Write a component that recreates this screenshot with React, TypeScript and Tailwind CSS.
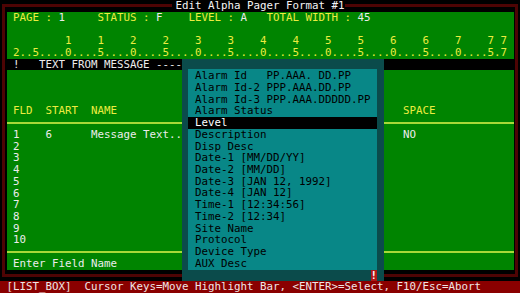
import React from "react";

const ROW = "h-[11.72px] leading-[11.72px]";

const listItems = [
  "Alarm Id   PP.AAA. DD.PP",
  "Alarm Id-2 PPP.AAA.DD.PP",
  "Alarm Id-3 PPP.AAA.DDDDD.PP",
  "Alarm Status",
  "Level",
  "Description",
  "Disp Desc",
  "Date-1 [MM/DD/YY]",
  "Date-2 [MM/DD]",
  "Date-3 [JAN 12, 1992]",
  "Date-4 [JAN 12]",
  "Time-1 [12:34:56]",
  "Time-2 [12:34]",
  "Site Name",
  "Protocol",
  "Device Type",
  "AUX Desc",
];

// column ruler, position p sits in screen column p
function buildRuler() {
  let tens = "";
  let ones = "";
  for (let p = 1; p <= 78; p++) {
    let t = " ";
    let o = p >= 2 && p <= 77 ? "." : " ";
    if (p % 5 === 0 && p <= 75) o = String(p % 10);
    if (p % 5 === 0 && p >= 10 && p <= 75) t = String(Math.floor(p / 10));
    if (p === 2) o = "2";
    if (p === 77) {
      o = "7";
      t = "7";
    }
    tens += t;
    ones += o;
  }
  return { tens, ones };
}

function Y({ children }: { children: React.ReactNode }) {
  return <span className="text-[#ecec40]">{children}</span>;
}

function Rule() {
  return (
    <div className={`${ROW} flex items-center`}>
      <div className="w-full h-[2px] bg-[#a8d838]" />
    </div>
  );
}

export default function App() {
  const { tens, ones } = buildRuler();
  const fields = ["1", "2", "3", "4", "5", "6", "7", "8", "9", "10"];

  return (
    <div className="relative w-[520px] h-[293px] overflow-hidden bg-black whitespace-pre text-[10.8px] text-[#ececec] font-['DejaVu_Sans_Mono',monospace]">
      <div className="h-[281.3px] pl-[2px] pt-[4px]">
        <div className="w-[516px] h-[272.5px] border-[3px] border-[#4e0404] pl-[1.5px] pr-[1.5px] pt-[4.72px] pb-[3.9px]">
          <div className="h-full bg-[#008400] flex flex-col">
            <div className={ROW}>
              <Y>{" PAGE : "}</Y>1<Y>{"     STATUS : "}</Y>F<Y>{"    LEVEL : "}</Y>A
              <Y>{"   TOTAL WIDTH : "}</Y>45
            </div>
            <div className={ROW} />
            <div className={`${ROW} text-[#ecec40]`}>{tens}</div>
            <div className={`${ROW} text-[#ecec40]`}>{ones}</div>
            <div className={`${ROW} bg-black`}>
              {" !   TEXT FROM MESSAGE ----------------------------------"}
            </div>
            <div className={ROW} />
            <div className={ROW} />
            <div className={ROW} />
            <div className={`${ROW} text-[#ecec40]`}>
              {" FLD  START  NAME                                            SPACE"}
            </div>
            <Rule />
            {fields.map((f) => (
              <div key={f} className={ROW}>
                {f === "1"
                  ? " 1    6      Message Text..                                  NO"
                  : ` ${f}`}
              </div>
            ))}
            <Rule />
            <div className={ROW}>{" Enter Field Name"}</div>
          </div>
        </div>
      </div>

      <div className={`${ROW} bg-[#8a0000] text-[#f0e4e4]`}>
        {" [LIST_BOX]  Cursor Keys=Move Highlight Bar, <ENTER>=Select, F10/Esc=Abort"}
      </div>

      {/* window title sits on the frame line */}
      <div className={`absolute top-0 left-[171.5px] pl-[4px] bg-black text-[#f4f4f4] ${ROW}`}>
        Edit Alpha Pager Format #1
      </div>

      {/* popup list box */}
      <div className="absolute left-[182px] top-[58.6px] w-[201.5px] h-[222.7px] bg-[#0b4b4b] pl-[5.5px] pr-[6.5px] pt-[10.4px] flex flex-col">
        <div className="h-[200.6px] bg-[#088787] pt-[1.3px] text-black">
          {listItems.map((item) => (
            <div
              key={item}
              className={`${ROW} pl-[7.5px] ${item === "Level" ? "bg-black text-white" : ""}`}
            >
              {item}
            </div>
          ))}
        </div>
        <div className={`${ROW} flex justify-end`}>
          <span className="w-[6.5px] text-center font-bold text-white bg-[#b01818]">!</span>
        </div>
      </div>
    </div>
  );
}
